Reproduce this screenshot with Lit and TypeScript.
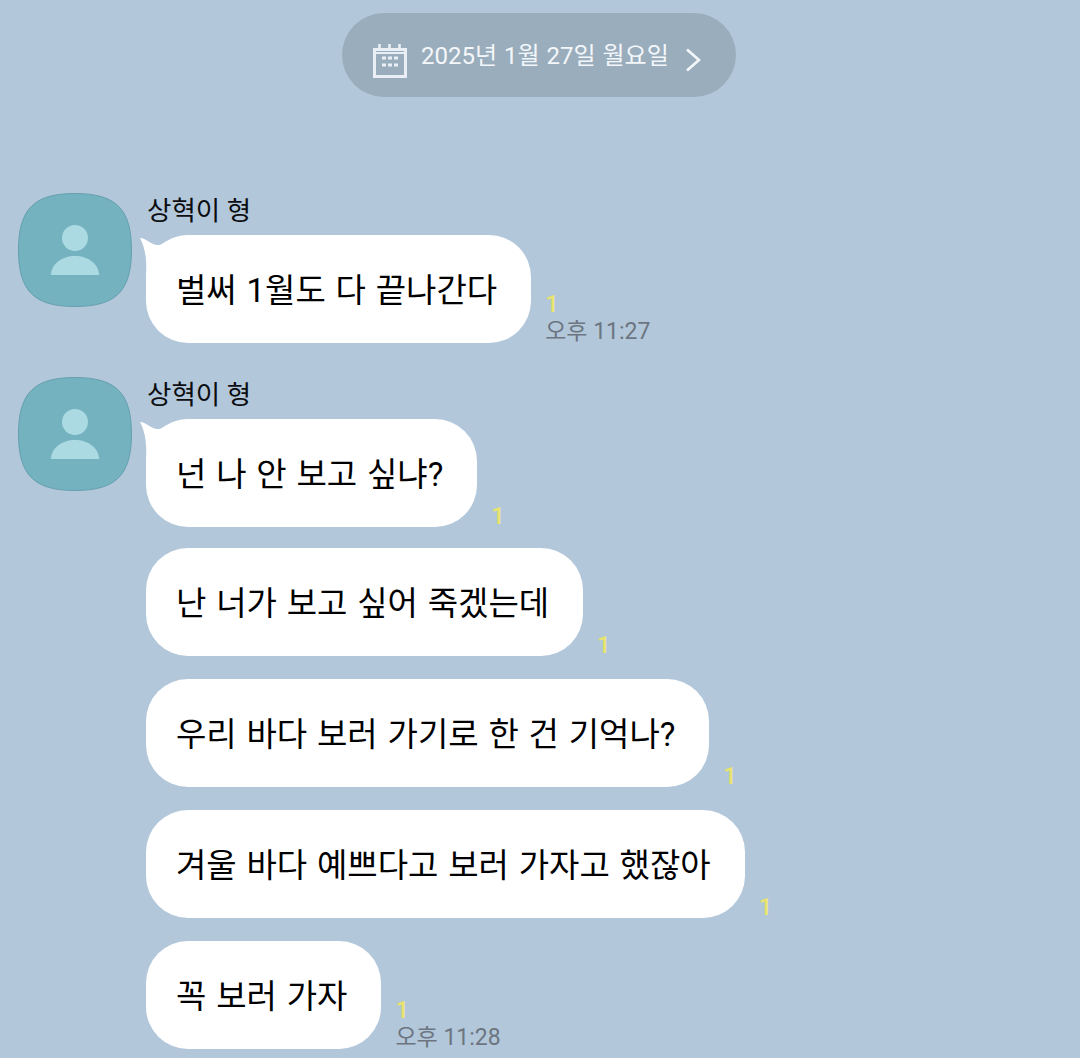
import { LitElement, html, css, svg } from "lit";
import { customElement } from "lit/decorators.js";

type Message = { text: string; time?: string };
type Group = { name: string; messages: Message[] };

const groups: Group[] = [
  { name: "상혁이 형", messages: [{ text: "벌써 1월도 다 끝나간다", time: "오후 11:27" }] },
  {
    name: "상혁이 형",
    messages: [
      { text: "넌 나 안 보고 싶냐?" },
      { text: "난 너가 보고 싶어 죽겠는데" },
      { text: "우리 바다 보러 가기로 한 건 기억나?" },
      { text: "겨울 바다 예쁘다고 보러 가자고 했잖아" },
      { text: "꼭 보러 가자", time: "오후 11:28" },
    ],
  },
];

const calendarIcon = svg`
  <svg class="cal" viewBox="0 0 34 34" width="34" height="34" fill="none" stroke="#e9eff4">
    <path stroke-width="3" d="M1.500 5.500H32.500V32.500H1.500Z" />
    <path stroke-width="2" d="M2 9H32" />
    <path stroke-width="2.600" d="M6.500 0V5M16.500 0V5M26.500 0V5" />
    <path stroke-width="3.200" stroke-dasharray="4 2" d="M9 14H25M9 21H25" />
  </svg>`;

const avatarIcon = svg`
  <svg viewBox="0 0 114 114" width="114" height="114">
    <path fill="#74b2c0" stroke="#66a0ae" stroke-width="1"
      d="M57 .5C98 .5 113.500 16 113.500 57S98 113.500 57 113.500 .5 98 .5 57 16 .5 57 .5Z" />
    <circle cx="57" cy="45" r="13" fill="#abdae2" />
    <path fill="#abdae2" d="M33 82C33 71 44 63 57 63S81 71 81 82Z" />
  </svg>`;

@customElement("app-root")
export class AppRoot extends LitElement {
  static styles = css`
    :host {
      display: block;
      height: 1058px;
      overflow: hidden;
      background: #b2c7da;
      font-family: Roboto, "Noto Sans CJK KR", sans-serif;
    }

    .date-row {
      display: flex;
      justify-content: center;
      padding: 13px 2px 0 0;
      margin-bottom: 96px;
    }

    .date {
      display: flex;
      align-items: center;
      box-sizing: border-box;
      width: 394px;
      height: 84px;
      padding-left: 31px;
      border-radius: 42px;
      background: #9aadbc;
      color: #f4f7fa;
      font-size: 24px;
    }

    .cal {
      margin: 12px 14px 0 0;
      flex: none;
    }

    .date span {
      line-height: 1;
      margin-top: 2px;
      white-space: nowrap;
      word-spacing: 1px;
    }

    .chev {
      margin: 10px 0 0 16px;
      flex: none;
    }

    .group {
      display: flex;
      align-items: flex-start;
      gap: 14px;
      padding-left: 18px;
      margin-bottom: 34px;
    }

    .avatar {
      width: 114px;
      height: 114px;
      flex: none;
    }

    .avatar svg {
      display: block;
    }

    .name {
      height: 42px;
      padding-left: 1px;
      font-size: 26.500px;
      line-height: 36px;
      color: #0c0d10;
    }

    .msgs {
      display: flex;
      flex-direction: column;
      gap: 23px;
      align-items: flex-start;
    }

    .msg {
      display: flex;
      align-items: flex-end;
      gap: 14px;
    }

    .msg:nth-child(2) {
      margin-top: -2px;
    }

    .bubble {
      position: relative;
      box-sizing: border-box;
      height: 108px;
      padding: 0 34px 2px 30px;
      display: flex;
      align-items: center;
      border-radius: 42px;
      background: #fff;
      color: #000;
      font-size: 33px;
      word-spacing: 1.600px;
      white-space: nowrap;
    }

    .tail {
      position: absolute;
      left: -7px;
      top: 0;
    }

    .meta {
      display: flex;
      flex-direction: column;
      font-size: 23px;
      line-height: 22px;
      color: #6c7580;
    }

    .unread {
      color: #e9e56c;
      font-size: 24px;
      font-weight: 500;
      line-height: 24px;
      margin-bottom: -1px;
    }

    .meta.timed .unread {
      margin-bottom: 5px;
    }
  `;

  render() {
    return html`
      <div class="date-row">
        <div class="date">
          ${calendarIcon}
          <span>2025년 1월 27일 월요일</span>
          <svg class="chev" viewBox="0 0 16 24" width="16" height="24" fill="none"
            stroke="#f4f7fa" stroke-width="2.600">
            <path d="M2 1.500L14 12 2 22.500" />
          </svg>
        </div>
      </div>
      ${groups.map(
        (g) => html`
          <div class="group">
            <div class="avatar">${avatarIcon}</div>
            <div>
              <div class="name">${g.name}</div>
              <div class="msgs">
                ${g.messages.map(
                  (m, i) => html`
                    <div class="msg">
                      <div class="bubble">
                        ${i === 0
                          ? html`<svg class="tail" viewBox="-7 0 52 45" width="52" height="45">
                              <path fill="#fff"
                                d="M-6 3C0 3 5 10 12 10 18 10 24 2 44 0V44H0C1 28 0 14-6 3Z" />
                            </svg>`
                          : ""}
                        <span>${m.text}</span>
                      </div>
                      <div class="meta ${m.time ? "timed" : ""}">
                        <div class="unread">1</div>
                        ${m.time ? html`<div>${m.time}</div>` : ""}
                      </div>
                    </div>
                  `
                )}
              </div>
            </div>
          </div>
        `
      )}
    `;
  }
}
